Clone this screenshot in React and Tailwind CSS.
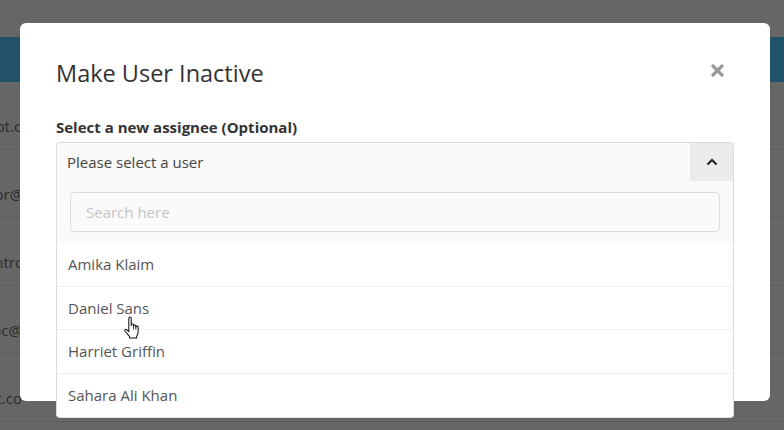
import React from 'react';

const rows = [
  { text: 'info@bluept.com', w: 'w-[44px]' },
  { text: 'director@mail.com', w: 'w-[87px]' },
  { text: 'control@site.com', w: 'w-[100px]' },
  { text: 'doc@inbox.com', w: 'w-[95px]' },
  { text: 'hi@gt.co', w: 'w-[22px]' },
];

const users = ['Amika Klaim', 'Daniel Sans', 'Harriet Griffin', 'Sahara Ali Khan'];

const HandCursor = () => (
  <svg width="20" height="23" viewBox="0 0 19 22" className="absolute z-20 left-[123px] top-[316px]">
    <path
      d="M5.5 2.2C5.5 0.6 7.8 0.6 7.8 2.2V9.2V8.4C7.8 7 10 7 10 8.4V9.6C10 8.3 12.2 8.3 12.2 9.6V10.6C12.2 9.4 14.4 9.4 14.4 10.6V15.2C14.4 17 13.6 18.4 13 19.4V21H6.2V19.6C5.2 18.4 3 16 1.8 14.4C1.1 13.4 2.3 12.2 3.4 13L5.5 15V2.2Z"
      fill="#fff"
      stroke="#111"
      strokeWidth="1"
      strokeLinejoin="round"
    />
    <path d="M10 9.6V13M12.2 10.6V13" stroke="#111" strokeWidth="0.8" />
  </svg>
);

export default function App() {
  return (
    <div className="relative w-[784px] h-[430px] overflow-hidden bg-[#666666] font-['Open_Sans',sans-serif]">
      {/* page behind the overlay */}
      <div className="flex flex-col">
        <div className="h-[37px]" />
        <div className="h-[45px] bg-[#22526a]" />
        {rows.map((r) => (
          <div key={r.text} className="h-[68px] border-b border-[#5c5c5c] flex items-end pb-[12px]">
            <div className="w-[21px] overflow-hidden">
              <div className={`${r.w} flex justify-end whitespace-nowrap text-[15px] text-[#2a2a2a]`}>{r.text}</div>
            </div>
          </div>
        ))}
      </div>

      {/* modal */}
      <div className="absolute left-[20px] top-[23px] w-[750px] h-[378px] bg-white rounded-[6px]">
        <div className="px-[36px] pt-[34px]">
          <div className="flex items-center justify-between">
            <h2 className="text-[23.5px] leading-[32px] text-[#333]">Make User Inactive</h2>
            <svg width="13" height="13" viewBox="0 0 13 13" className="mr-[10px] -mt-[6px]">
              <path d="M2 2L11 11M11 2L2 11" stroke="#9a9a9a" strokeWidth="3.2" strokeLinecap="round" />
            </svg>
          </div>
          <div className="mt-[28px] text-[15px] leading-[20px] font-bold text-[#333]">
            Select a new assignee (Optional)
          </div>
          <div className="relative mt-[5px]">
            <div className="flex h-[39px] border border-[#dcdcdc] border-b-0 rounded-t-[4px] bg-[#fafafa]">
              <div className="flex-1 flex items-center pl-[10px] text-[15px] text-[#444]">Please select a user</div>
              <div className="w-[43px] flex items-center justify-center bg-[#ebebeb] rounded-tr-[4px]">
                <svg width="12" height="8" viewBox="0 0 12 8">
                  <path d="M1.5 6.5L6 2L10.5 6.5" fill="none" stroke="#222" strokeWidth="2" />
                </svg>
              </div>
            </div>
            {/* open menu */}
            <div className="absolute left-0 right-0 top-[39px] z-10 border border-t-0 border-[#dcdcdc] rounded-b-[4px] bg-white overflow-hidden">
              <div className="bg-[#fafafa] px-[13px] pt-[11px] pb-[11px]">
                <div className="h-[40px] flex items-center pl-[15px] border border-[#dcdcdc] rounded-[4px] text-[15px] text-[#c4c4c4]">
                  Search here
                </div>
              </div>
              {users.map((u, i) => (
                <div
                  key={u}
                  className={`h-[43.5px] flex items-center pl-[11px] text-[15px] text-[#555] ${i < users.length - 1 ? 'border-b border-[#f0f0f0]' : ''}`}
                >
                  {u}
                </div>
              ))}
            </div>
          </div>
        </div>
      </div>

      <HandCursor />
    </div>
  );
}
